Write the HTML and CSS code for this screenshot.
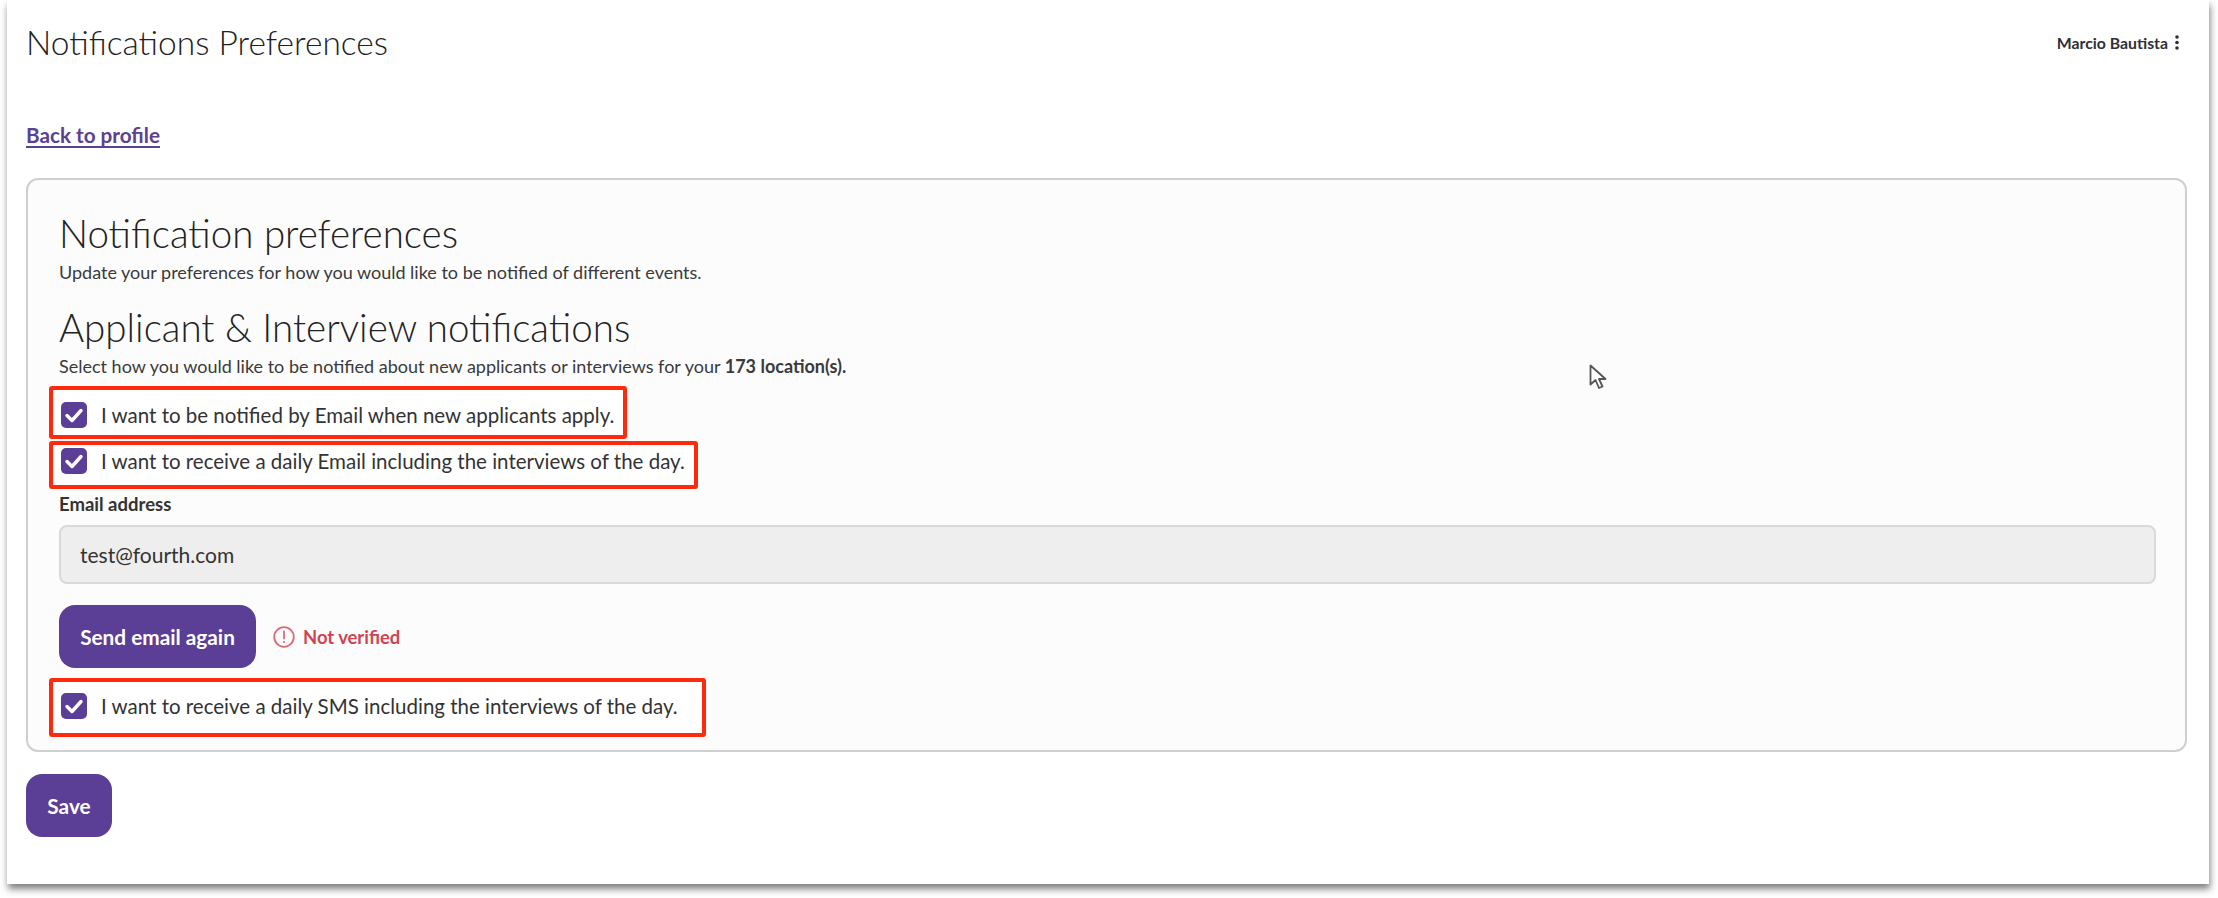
FILE: index.html
```html
<!doctype html>
<html>
<head>
<meta charset="utf-8">
<title>Notifications Preferences</title>
<link rel="stylesheet" href="styles.css">
</head>
<body>
  <div id="page">
    <div class="top-bar">
      <h1 class="page-title">Notifications Preferences</h1>
      <div class="user-menu">
        <span>Marcio Bautista</span>
        <svg class="dots" width="6" height="15" viewBox="0 0 6 15"><circle cx="3" cy="2" r="1.8"/><circle cx="3" cy="7.5" r="1.8"/><circle cx="3" cy="13" r="1.8"/></svg>
      </div>
    </div>

    <a class="back-link" href="#">Back to profile</a>

    <div class="card">
      <h2 class="heading">Notification preferences</h2>
      <p class="sub">Update your preferences for how you would like to be notified of different events.</p>

      <h2 class="heading heading-second">Applicant &amp; Interview notifications</h2>
      <p class="sub">Select how you would like to be notified about new applicants or interviews for your <b>173 location(s).</b></p>

      <label class="check-row row-one">
        <svg class="check" width="26" height="26" viewBox="0 0 26 26"><rect width="26" height="26" rx="5"/><path d="M6 13.5l5 5 9-10"/></svg>
        <span>I want to be notified by Email when new applicants apply.</span>
      </label>
      <label class="check-row row-two">
        <svg class="check" width="26" height="26" viewBox="0 0 26 26"><rect width="26" height="26" rx="5"/><path d="M6 13.5l5 5 9-10"/></svg>
        <span>I want to receive a daily Email including the interviews of the day.</span>
      </label>

      <div class="field-label">Email address</div>
      <div class="field">test@fourth.com</div>

      <div class="verify-row">
        <button class="btn btn-send">Send email again</button>
        <div class="not-verified">
          <svg width="22" height="22" viewBox="0 0 22 22"><circle cx="11" cy="11" r="9.8"/><path d="M11 5.5v7"/><path d="M11 15.6v.6"/></svg>
          <span>Not verified</span>
        </div>
      </div>

      <label class="check-row row-three">
        <svg class="check" width="26" height="26" viewBox="0 0 26 26"><rect width="26" height="26" rx="5"/><path d="M6 13.5l5 5 9-10"/></svg>
        <span>I want to receive a daily SMS including the interviews of the day.</span>
      </label>
    </div>

    <button class="btn btn-save">Save</button>

    <svg class="cursor" width="18" height="26" viewBox="0 0 18 26"><path d="M1.5 1.5v19l5-4.5 3.5 8 3.5-1.5-3.5-7.5h6.5z"/></svg>
  </div>
</body>
</html>
```

FILE: styles.css
```css
html, body {
  margin: 0;
  padding: 0;
  height: 100%;
  background: #fff;
  overflow: hidden;
}

body {
  font-family: "Lato", sans-serif;
  color: #333;
}

#page {
  position: relative;
  box-sizing: border-box;
  width: 2202px;
  height: 884px;
  margin-left: 7px;
  padding: 0 22px 0 19px;
  background: #fff;
  box-shadow: 1px 5px 7px rgba(0, 0, 0, 0.5);
}

.top-bar {
  display: flex;
  align-items: center;
  justify-content: space-between;
  height: 84px;
  padding-right: 7px;
}

.page-title {
  margin: 0;
  font-size: 33.5px;
  font-weight: 300;
  color: #222;
}

.user-menu {
  display: flex;
  align-items: center;
  gap: 6px;
  font-size: 15.8px;
  font-weight: 700;
  color: #2f2f38;
}

.dots {
  fill: #2f2f38;
}

.back-link {
  display: block;
  width: fit-content;
  margin-top: 39px;
  font-size: 20.7px;
  line-height: 24px;
  font-weight: 700;
  color: #5b4191;
  text-decoration: underline;
  text-underline-offset: 3px;
}

.card {
  box-sizing: border-box;
  height: 574px;
  margin-top: 31px;
  padding: 33px 29px 13px 31px;
  background: #fcfcfc;
  border: 2px solid #cfcfcf;
  border-radius: 12px;
}

.heading {
  margin: 0;
  font-size: 38.5px;
  line-height: 40px;
  font-weight: 300;
  color: #222;
}

.heading-second {
  margin-top: 25px;
}

.sub {
  margin: 9px 0 0;
  font-size: 18px;
  line-height: 20px;
  color: #3a3a3a;
}

.check-row {
  box-sizing: border-box;
  display: flex;
  align-items: flex-start;
  gap: 14px;
  width: fit-content;
  margin-left: -10px;
  padding-left: 8px;
  padding-right: 9px;
  border: 4px solid #ff2a0d;
  border-radius: 3px;
  background: #fff;
  font-size: 20.5px;
  line-height: 26px;
  color: #333;
}

.row-one {
  height: 53px;
  margin-top: 10px;
  padding-top: 12px;
}

.row-two {
  height: 48px;
  margin-top: 2px;
  padding-top: 3px;
}

.row-three {
  height: 59px;
  margin-top: 10px;
  padding-top: 11px;
  padding-right: 24px;
}

.check {
  flex: 0 0 auto;
}

.check rect {
  fill: #5b3e96;
}

.check path {
  fill: none;
  stroke: #fff;
  stroke-width: 3.4;
  stroke-linecap: round;
  stroke-linejoin: round;
}

.field-label {
  margin-top: 5px;
  font-size: 18.5px;
  line-height: 20px;
  font-weight: 700;
  color: #333;
}

.field {
  box-sizing: border-box;
  display: flex;
  align-items: center;
  height: 59px;
  margin-top: 11px;
  padding-left: 19px;
  background: #eee;
  border: 2px solid #d9d9d9;
  border-radius: 8px;
  font-size: 21px;
  color: #333;
}

.verify-row {
  display: flex;
  align-items: center;
  gap: 17px;
  margin-top: 21px;
}

.btn {
  border: 0;
  border-radius: 16px;
  background: #5b3e96;
  color: #fff;
  font-family: "Lato", sans-serif;
  font-size: 20.8px;
  font-weight: 700;
  height: 63px;
  padding: 0;
}

.btn-send {
  width: 197px;
}

.btn-save {
  display: block;
  width: 86px;
  margin-top: 22px;
}

.not-verified {
  display: flex;
  align-items: center;
  gap: 8px;
  font-size: 18.4px;
  font-weight: 700;
  color: #cf4452;
}

.not-verified svg {
  fill: none;
  stroke: #dc6a75;
  stroke-width: 1.8;
  stroke-linecap: round;
}

.cursor {
  position: absolute;
  left: 1582px;
  top: 364px;
  fill: #fff;
  stroke: #555;
  stroke-width: 1.8;
  stroke-linejoin: round;
}
```
